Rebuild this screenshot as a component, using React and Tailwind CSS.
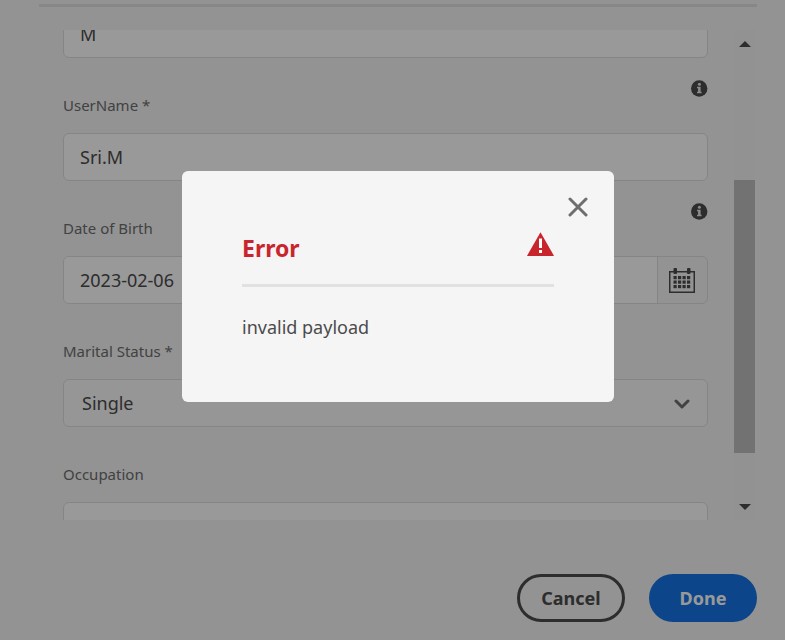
import React from "react";

const fieldBox =
  "block h-12 w-full rounded-md border border-[#dedede] bg-white px-4 text-lg leading-6 text-[#4b4b4b] outline-none";

function InfoIcon() {
  return (
    <svg viewBox="0 0 17 17" className="size-[17px]" aria-hidden="true">
      <circle cx="8.2" cy="8.5" r="8.2" fill="#4b4b4b" />
      <path d="M6 6.8h3.6v4.9h1v1.5H6v-1.5h1.1V8.3H6z" fill="#e8e8e8" />
      <circle cx="8.4" cy="4.3" r="1.5" fill="#e8e8e8" />
    </svg>
  );
}

function CalendarIcon() {
  const rows = [8, 12.5, 17];
  const cols = [4.5, 9, 13.5, 18];
  return (
    <svg viewBox="0 0 26 25" className="h-[25px] w-[26px]" aria-hidden="true" fill="#4b4b4b">
      <path d="M0 3h26v22H0zM1.5 4.5v19h23v-19z" fillRule="evenodd" />
      <rect x="4.5" y="0" width="3.5" height="6" rx="1" />
      <rect x="18" y="0" width="3.5" height="6" rx="1" />
      {rows.map((y) => cols.map((x) => <rect key={x + "-" + y} x={x} y={y} width="3.2" height="3.2" />))}
    </svg>
  );
}

function Field({ id, label, info, children }) {
  return (
    <div className="flex flex-col">
      <div className="flex h-[75px] items-start justify-between">
        <label htmlFor={id} className="pt-[35px] text-[15px] leading-6 text-[#6e6e6e]">
          {label}
        </label>
        {info && (
          <button type="button" aria-label={"About " + label} className="mt-[22px]">
            <InfoIcon />
          </button>
        )}
      </div>
      {children}
    </div>
  );
}

function ScrollBar() {
  return (
    <div className="flex w-[21px] flex-col items-center bg-[#f3f3f3]" aria-hidden="true">
      <svg viewBox="0 0 12 6" className="mt-[11px] h-[6px] w-3" fill="#4b4b4b">
        <path d="M0 6L6 0l6 6z" />
      </svg>
      <div className="w-full flex-[133]" />
      <div className="w-full flex-[273] bg-[#bebebe]" />
      <div className="w-full flex-[51]" />
      <svg viewBox="0 0 12 6" className="mb-[10px] h-[6px] w-3" fill="#4b4b4b">
        <path d="M0 0l6 6 6-6z" />
      </svg>
    </div>
  );
}

function ErrorDialog() {
  return (
    <div className="fixed inset-0 flex items-start justify-center bg-black/40 pt-[171px] pl-[11px]">
      <div
        role="alertdialog"
        aria-labelledby="error-title"
        aria-describedby="error-text"
        className="w-[432px] rounded-md bg-[#f5f5f5] pb-[60px]"
      >
        <div className="flex justify-end pt-[26px] pr-[26px]">
          <button type="button" aria-label="Close">
            <svg viewBox="0 0 20 20" className="size-5" fill="none" stroke="#6e6e6e" strokeWidth="3" strokeLinecap="round">
              <path d="M2 2l16 16M18 2L2 18" />
            </svg>
          </button>
        </div>
        <div className="mx-[60px]">
          <div className="flex items-start justify-between border-b-[3px] border-[#e1e1e1] pt-[15px] pb-5">
            <h2 id="error-title" className="text-[23px] leading-8 font-bold text-[#c9252d]">
              Error
            </h2>
            <svg viewBox="0 0 27 24" className="h-6 w-[27px]" aria-hidden="true">
              <path d="M13.5 0.3L26.8 23.4Q27 24 26.3 24H0.7Q0 24 0.2 23.4z" fill="#c9252d" />
              <path d="M12 6.5h3V16h-3zM12 18h3v3h-3z" fill="#fff" />
            </svg>
          </div>
          <p id="error-text" className="pt-[26px] pb-[1px] text-lg leading-7 text-[#4b4b4b]">
            invalid payload
          </p>
        </div>
      </div>
    </div>
  );
}

export default function App() {
  return (
    <div className="flex min-h-screen flex-col bg-[#f5f5f5] pt-1 pr-7 pl-[39px] font-['Noto_Sans','Open_Sans',sans-serif]">
      <div className="h-[3px] bg-[#e1e1e1]" />
      <form className="flex flex-col" onSubmit={(e) => e.preventDefault()}>
        <div className="mt-[23px] mr-[2px] ml-6 flex h-[490px] gap-[26px] overflow-hidden">
          <div className="-mt-5 min-w-0 flex-1">
            <input aria-label="Last name" defaultValue="M" className={fieldBox} />
            <Field id="username" label="UserName *" info>
              <input id="username" defaultValue="Sri.M" className={fieldBox} />
            </Field>
            <Field id="birth" label="Date of Birth" info>
              <div className="flex h-12 overflow-hidden rounded-md border border-[#dedede]">
                <input
                  id="birth"
                  defaultValue="2023-02-06"
                  className="min-w-0 flex-1 bg-white px-4 text-lg leading-6 text-[#4b4b4b] outline-none"
                />
                <button
                  type="button"
                  aria-label="Open calendar"
                  className="flex w-[50px] items-center justify-center border-l border-[#dedede] pr-[2px]"
                >
                  <CalendarIcon />
                </button>
              </div>
            </Field>
            <Field id="marital" label="Marital Status *">
              <div className="relative">
                <select
                  id="marital"
                  defaultValue="Single"
                  className="block h-12 w-full appearance-none rounded-md border border-[#dedede] bg-[#fafafa] px-[18px] text-lg leading-6 text-[#4b4b4b] outline-none"
                >
                  <option>Single</option>
                </select>
                <svg
                  viewBox="0 0 16 10"
                  className="pointer-events-none absolute top-5 right-[18px] h-[10px] w-4"
                  fill="none"
                  stroke="#6e6e6e"
                  strokeWidth="3"
                  strokeLinecap="round"
                  strokeLinejoin="round"
                >
                  <path d="M2 2l6 6 6-6" />
                </svg>
              </div>
            </Field>
            <Field id="occupation" label="Occupation">
              <input id="occupation" defaultValue="Social" className={fieldBox + " pt-[2px]"} />
            </Field>
          </div>
          <ScrollBar />
        </div>
        <div className="flex justify-end gap-6 pt-[54px]">
          <button
            type="button"
            className="h-12 w-[108px] rounded-full border-[3px] border-[#4b4b4b] text-lg leading-6 font-bold text-[#4b4b4b]"
          >
            Cancel
          </button>
          <button type="submit" className="h-12 w-[108px] rounded-full bg-[#1473e6] text-lg leading-6 font-bold text-white">
            Done
          </button>
        </div>
      </form>
      <ErrorDialog />
    </div>
  );
}
